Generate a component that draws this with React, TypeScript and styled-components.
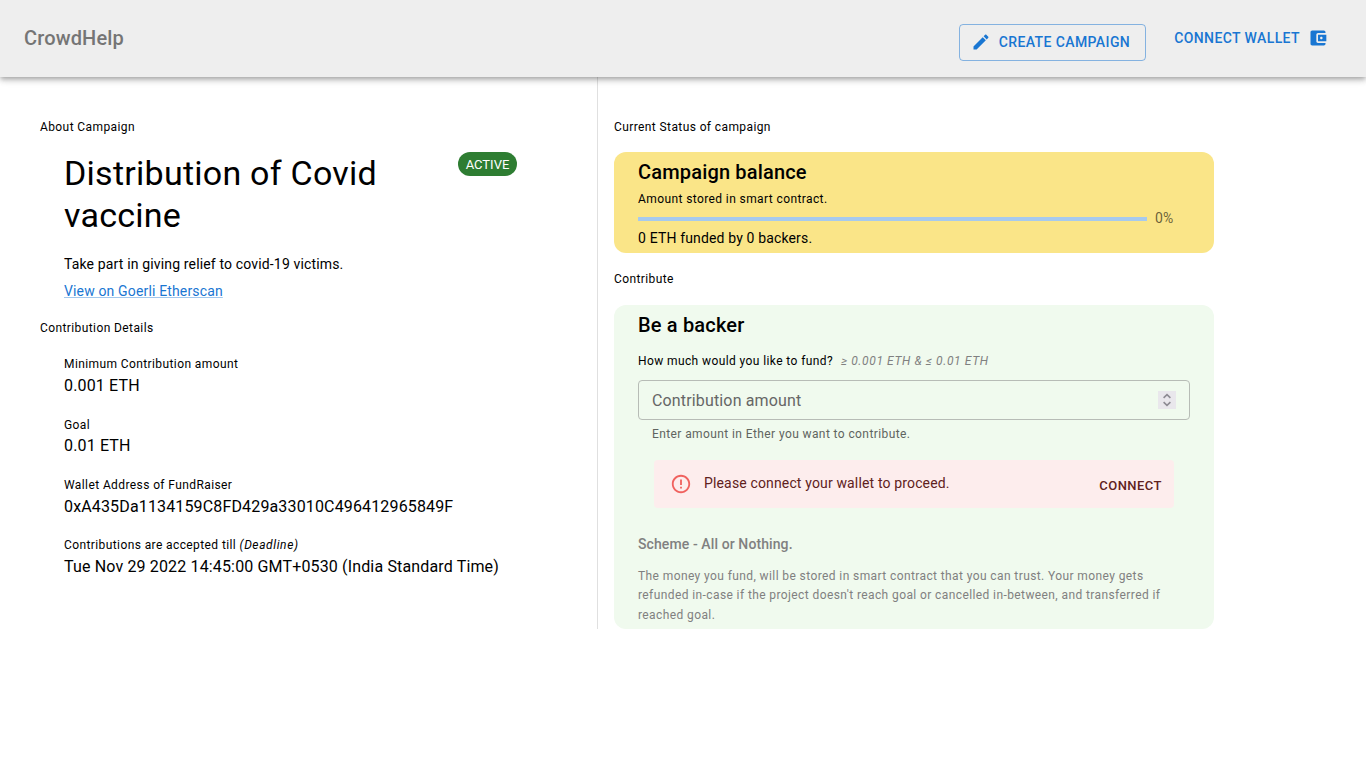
import React from "react";
import styled, { createGlobalStyle } from "styled-components";

const Global = createGlobalStyle`
  *, *::before, *::after { box-sizing: border-box; }
  body { margin: 0; background: #fff; color: #000; font-family: Roboto, "Liberation Sans", sans-serif; font-size: 16px; line-height: 1.5; }
  h1, h2, h3, p, dl, dt, dd { margin: 0; }
`;

const Header = styled.header`
  position: relative;
  display: flex;
  align-items: center;
  justify-content: space-between;
  height: 77px;
  padding: 0 26px 0 24px;
  background: #eee;
  box-shadow: 0 2px 4px -1px rgba(0, 0, 0, 0.2), 0 4px 5px 0 rgba(0, 0, 0, 0.14), 0 1px 10px 0 rgba(0, 0, 0, 0.12);
`;

const Brand = styled.div`
  padding-bottom: 2px;
  font-size: 20px;
  font-weight: 500;
  line-height: 32px;
  letter-spacing: 0.15px;
  color: #757575;
`;

const Nav = styled.nav`
  display: flex;
  align-items: flex-start;
  gap: 16px;
  padding-top: 8px;
`;

const NavButton = styled.button<{ $outlined?: boolean }>`
  display: inline-flex;
  align-items: center;
  gap: 8px;
  height: ${(p) => (p.$outlined ? "37px" : "28px")};
  padding: ${(p) => (p.$outlined ? "0 15px 0 11px" : "0 12px")};
  border: ${(p) => (p.$outlined ? "1px solid rgba(25, 118, 210, 0.5)" : "0")};
  border-radius: 4px;
  background: transparent;
  color: #1976d2;
  font: 500 14px/24.5px Roboto, sans-serif;
  letter-spacing: 0.4px;
  white-space: nowrap;
`;

const Icon = styled.svg<{ $size: number }>`
  flex: none;
  width: ${(p) => p.$size}px;
  height: ${(p) => p.$size}px;
  fill: currentColor;
`;

const NavIcon = styled(Icon)`
  margin-bottom: 1px;
`;

const Page = styled.main`
  display: flex;
  align-items: stretch;
  height: 552px;
`;

const About = styled.section`
  width: 598px;
  padding: 41px 80px 0 40px;
  border-right: 1px solid #e0e0e0;
`;

const Status = styled.section`
  width: 616px;
  padding: 41px 0 0 16px;
`;

const Caption = styled.div`
  font-size: 12px;
  line-height: 19.92px;
  letter-spacing: 0.4px;
`;

const Intro = styled.div`
  padding: 14px 0 0 24px;
`;

const TitleRow = styled.div`
  display: flex;
  justify-content: space-between;
  align-items: flex-start;
`;

const Title = styled.h1`
  width: 360px;
  font-size: 34px;
  font-weight: 400;
  line-height: 42px;
  letter-spacing: 0.25px;
`;

const Badge = styled.span`
  width: 59px;
  height: 24px;
  border-radius: 12px;
  background: #2e7d32;
  color: #fff;
  font-size: 13px;
  line-height: 25px;
  text-align: center;
`;

const Text = styled.p`
  font-size: 14px;
  line-height: 20px;
  letter-spacing: 0.15px;
`;

const Summary = styled(Text)`
  margin-top: 18px;
`;

const Link = styled.a`
  display: inline-block;
  margin: 7px 0 18px;
  font-size: 14px;
  line-height: 20px;
  letter-spacing: 0.15px;
  color: #1976d2;
  text-decoration: underline;
  text-decoration-color: rgba(25, 118, 210, 0.4);
`;

const Details = styled.dl`
  display: flex;
  flex-direction: column;
  gap: 17.4px;
  padding: 16.4px 0 0 24px;
`;

const Term = styled(Caption)`
  em { letter-spacing: 0.6px; }
`;

const Value = styled.dd`
  margin-top: -1px;
  line-height: 24px;
  letter-spacing: 0.15px;
  white-space: nowrap;
`;

const Card = styled.div<{ $tone: string }>`
  width: 600px;
  padding: 4px 24px 5px;
  border-radius: 12px;
  background: ${(p) => p.$tone};
`;

const BalanceCard = styled(Card)`
  height: 101px;
  margin: 14px 0 17px;
`;

const BackerCard = styled(Card)`
  height: 324px;
  margin-top: 15px;
`;

const CardTitle = styled.h2`
  font-size: 20px;
  font-weight: 500;
  line-height: 32px;
  letter-spacing: 0.17px;
`;

const BalanceNote = styled(Caption)`
  margin: 2px 0 -1px;
`;

const Progress = styled.div`
  display: flex;
  align-items: center;
  gap: 8px;
  height: 20px;
  margin-bottom: -1px;
`;

const Track = styled.div`
  width: 509px;
  height: 4px;
  background: #a7caed;
`;

const Percent = styled(Text)`
  padding-bottom: 2px;
  color: rgba(0, 0, 0, 0.6);
`;

const Question = styled(Caption)`
  margin-top: 11px;
`;

const Range = styled.em`
  margin-left: 4.5px;
  letter-spacing: 0.62px;
  color: #808080;
`;

const Field = styled.div`
  display: flex;
  align-items: center;
  justify-content: space-between;
  height: 40px;
  margin-top: 8px;
  padding: 0 13px;
  border: 1px solid #b7bcb6;
  border-radius: 4px;
  color: #666;
  letter-spacing: 0.15px;
`;

const Placeholder = styled.span`
  padding-top: 2px;
`;

const Stepper = styled.span`
  display: flex;
  width: 18px;
  height: 18px;
  background: #e9e7ec;
  color: #8d8b93;
`;

const Helper = styled(Caption)`
  margin: 5px 14px 0;
  color: #606460;
`;

const Alert = styled.div`
  display: flex;
  align-items: center;
  height: 48px;
  margin: 15px 16px 0;
  padding: 0 12px 0 16px;
  border-radius: 4px;
  background: #fdeded;
  color: #5f2120;
`;

const AlertIcon = styled(Icon)`
  margin-right: 12px;
  color: #ef5350;
  opacity: 0.9;
`;

const AlertText = styled(Text)`
  flex: 1;
  padding-bottom: 2px;
`;

const AlertAction = styled.button`
  padding: 5px 0 0;
  border: 0;
  background: transparent;
  color: inherit;
  font: 500 13px/22.75px Roboto, sans-serif;
  letter-spacing: 0.46px;
`;

const Scheme = styled.h3`
  margin-top: 25px;
  font-size: 14px;
  font-weight: 500;
  line-height: 22px;
  letter-spacing: 0.1px;
  color: #808080;
`;

const Terms = styled(Caption)`
  margin-top: 12px;
  line-height: 19.6px;
  color: #808080;
`;

const details: { label: string; note?: string; value: string }[] = [
  { label: "Minimum Contribution amount", value: "0.001 ETH" },
  { label: "Goal", value: "0.01 ETH" },
  { label: "Wallet Address of FundRaiser", value: "0xA435Da1134159C8FD429a33010C496412965849F" },
  { label: "Contributions are accepted till", note: "(Deadline)", value: "Tue Nov 29 2022 14:45:00 GMT+0530 (India Standard Time)" },
];

export default function App() {
  return (
    <>
      <Global />
      <Header>
        <Brand>CrowdHelp</Brand>
        <Nav>
          <NavButton $outlined>
            <NavIcon $size={20} viewBox="0 0 24 24">
              <path d="M3 17.25V21h3.75L17.81 9.94l-3.75-3.75L3 17.25zM20.71 7.04c.39-.39.39-1.02 0-1.41l-2.34-2.34c-.39-.39-1.02-.39-1.41 0l-1.83 1.83 3.75 3.75 1.83-1.83z" />
            </NavIcon>
            CREATE CAMPAIGN
          </NavButton>
          <NavButton>
            CONNECT WALLET
            <NavIcon $size={20} viewBox="0 0 24 24">
              <path d="M21 18v1c0 1.1-.9 2-2 2H5c-1.11 0-2-.9-2-2V5c0-1.1.89-2 2-2h14c1.1 0 2 .9 2 2v1h-9c-1.11 0-2 .9-2 2v8c0 1.1.89 2 2 2h9zm-9-2h10V8H12v8zm4-2.5c-.83 0-1.5-.67-1.5-1.5s.67-1.5 1.5-1.5 1.5.67 1.5 1.5-.67 1.5-1.5 1.5z" />
            </NavIcon>
          </NavButton>
        </Nav>
      </Header>
      <Page>
        <About>
          <Caption>About Campaign</Caption>
          <Intro>
            <TitleRow>
              <Title>Distribution of Covid vaccine</Title>
              <Badge>ACTIVE</Badge>
            </TitleRow>
            <Summary>Take part in giving relief to covid-19 victims.</Summary>
            <Link>View on Goerli Etherscan</Link>
          </Intro>
          <Caption>Contribution Details</Caption>
          <Details>
            {details.map((d) => (
              <div key={d.label}>
                <Term as="dt">
                  {d.label} {d.note && <em>{d.note}</em>}
                </Term>
                <Value>{d.value}</Value>
              </div>
            ))}
          </Details>
        </About>
        <Status>
          <Caption>Current Status of campaign</Caption>
          <BalanceCard $tone="#fae588">
            <CardTitle>Campaign balance</CardTitle>
            <BalanceNote>Amount stored in smart contract.</BalanceNote>
            <Progress>
              <Track />
              <Percent>0%</Percent>
            </Progress>
            <Text>0 ETH funded by 0 backers.</Text>
          </BalanceCard>
          <Caption>Contribute</Caption>
          <BackerCard $tone="#f0faee">
            <CardTitle>Be a backer</CardTitle>
            <Question>
              How much would you like to fund? <Range>≥ 0.001 ETH &amp; ≤ 0.01 ETH</Range>
            </Question>
            <Field>
              <Placeholder>Contribution amount</Placeholder>
              <Stepper>
                <svg width="18" height="18" viewBox="0 0 18 18" fill="none" stroke="currentColor" strokeWidth="1.6">
                  <path d="M5.6 6.8 9 3.6l3.4 3.2M5.6 11.2 9 14.4l3.4-3.2" />
                </svg>
              </Stepper>
            </Field>
            <Helper>Enter amount in Ether you want to contribute.</Helper>
            <Alert>
              <AlertIcon $size={22} viewBox="0 0 24 24">
                <path d="M11 15h2v2h-2zm0-8h2v6h-2zm.99-5C6.47 2 2 6.48 2 12s4.47 10 9.99 10C17.52 22 22 17.52 22 12S17.52 2 11.99 2zM12 20c-4.42 0-8-3.58-8-8s3.58-8 8-8 8 3.58 8 8-3.58 8-8 8z" />
              </AlertIcon>
              <AlertText>Please connect your wallet to proceed.</AlertText>
              <AlertAction>CONNECT</AlertAction>
            </Alert>
            <Scheme>Scheme - All or Nothing.</Scheme>
            <Terms>
              The money you fund, will be stored in smart contract that you can trust. Your money gets refunded in-case if the
              project doesn't reach goal or cancelled in-between, and transferred if reached goal.
            </Terms>
          </BackerCard>
        </Status>
      </Page>
    </>
  );
}
